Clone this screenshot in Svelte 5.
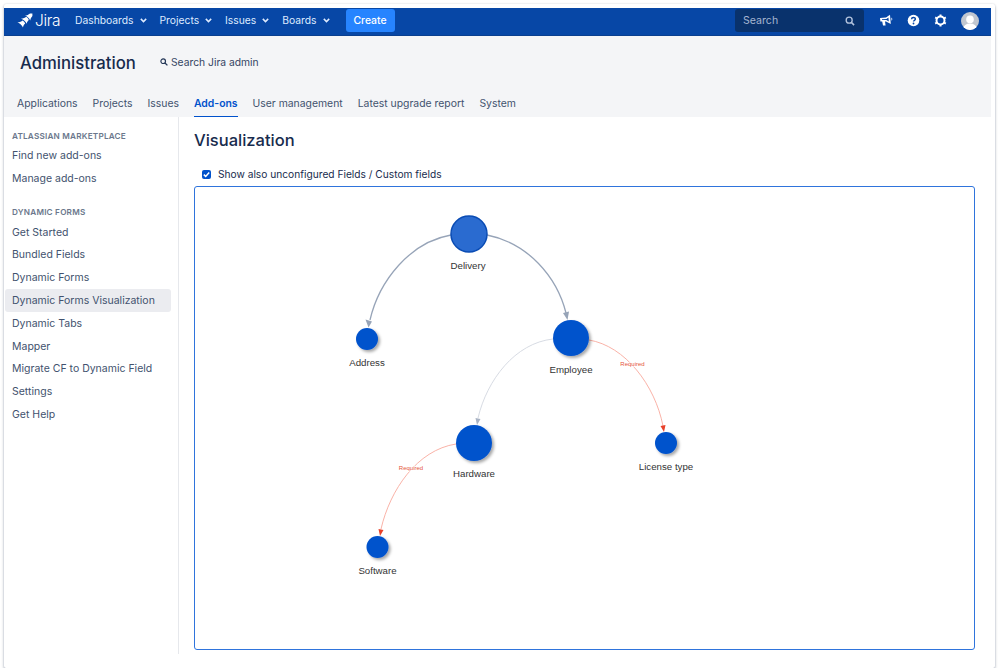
<script lang="ts">
    const navItems = ["Dashboards", "Projects", "Issues", "Boards"];
    const tabs = ["Applications", "Projects", "Issues", "Add-ons", "User management", "Latest upgrade report", "System"];
    const sections = [
        { title: "Atlassian Marketplace", links: ["Find new add-ons", "Manage add-ons"] },
        {
            title: "Dynamic Forms",
            links: ["Get Started", "Bundled Fields", "Dynamic Forms", "Dynamic Forms Visualization", "Dynamic Tabs", "Mapper", "Migrate CF to Dynamic Field", "Settings", "Get Help"],
        },
    ];

    // graph coordinates are page pixels, the svg viewBox maps them into the panel
    const nodes = [
        { label: "Delivery", x: 469, y: 234, r: 18, ly: 268.5, root: true },
        { label: "Address", x: 367, y: 339, r: 11, ly: 365.5 },
        { label: "Employee", x: 571, y: 338, r: 18, ly: 372.5 },
        { label: "Hardware", x: 474, y: 443, r: 18, ly: 476.5 },
        { label: "License type", x: 666, y: 443, r: 11, ly: 469.5 },
        { label: "Software", x: 377.5, y: 547, r: 11, ly: 573.5 },
    ];
    const edges = [
        { d: "M451 235 C410 242 379 281 370 320", kind: "main", head: "365.5,319.5 372,321.5 368.5,327.5" },
        { d: "M487 235 C528 243 557 277 566 313", kind: "main", head: "563,313 569,311.5 567.5,320" },
        { d: "M553 339 C515 343 487 380 478 418", kind: "plain", head: "475.5,418 480.5,419 477,425" },
        { d: "M589 340 C625 346 655 385 663 426", kind: "req", head: "660.5,426 665.5,425 664,432" },
        { d: "M456 444 C417 450 390 490 381 529", kind: "req", head: "378.5,529 383.5,530 380,536" },
    ];
</script>

<div class="window">
    <header class="topbar">
        <div class="logo">
            <svg width="16" height="15" viewBox="0 0 16 15">
                <path d="M8 2.6 C10 2.4 11.5 1.6 13 0.4 L15.4 0.4 L15.4 3 C14 4.5 13.4 6 13.2 7.6 C12.2 5.2 10.4 3.4 8 2.6 Z" fill="#fff" />
                <path d="M4 5.8 C6.4 5.6 8 4.8 9.2 3.8 C10.6 4.6 11.4 5.8 11.8 7 C10.8 7.8 9.8 9.4 9.6 10.8 C8.6 8.4 6.6 6.6 4 5.8 Z" fill="#fff" />
                <path d="M0.4 9.4 C2.8 9.2 4.4 8.4 5.6 7.4 C7 8.2 7.8 9.4 8.2 10.6 C7 11.6 6.2 13 6 14.6 C5 12 3 10.2 0.4 9.4 Z" fill="#fff" />
            </svg>
            <span>Jira</span>
        </div>
        <nav class="nav">
            {#each navItems as item}
                <span class="nav-item">
                    {item}
                    <svg width="7" height="5" viewBox="0 0 7 5"><path d="M0.8 0.9 L3.5 3.6 L6.2 0.9" fill="none" stroke="#deebff" stroke-width="1.5" /></svg>
                </span>
            {/each}
        </nav>
        <button class="create">Create</button>
        <div class="spacer"></div>
        <div class="search">
            <span>Search</span>
            <svg width="10" height="10" viewBox="0 0 11 11"><circle cx="4.6" cy="4.6" r="3.3" fill="none" stroke="#b3c3dd" stroke-width="1.5" /><path d="M7 7 L10 10" stroke="#b3c3dd" stroke-width="1.7" /></svg>
        </div>
        <div class="top-icons">
            <svg width="14" height="13" viewBox="0 0 14 13">
                <path d="M1 4 L7 3.5 L11 0.8 L11.8 10 L7 7.5 L6 7.5 L6.6 11.5 L4 11.5 L3.2 7.6 L1.4 7.5 Z M3 5.3 L3 6 L7.4 6 L9.8 7.4 L9.4 3.4 L7.4 5 Z M12.3 3.6 C13.6 4.4 13.6 6 12.5 6.8 Z" fill="#fff" fill-rule="evenodd" />
            </svg>
            <svg width="13" height="13" viewBox="0 0 13 13">
                <circle cx="6.5" cy="6.5" r="5.8" fill="#fff" />
                <path d="M4.5 5.2 C4.6 3 8.4 3 8.4 5 C8.4 6.4 6.5 6.2 6.5 7.6" fill="none" stroke="#0747a6" stroke-width="1.4" />
                <circle cx="6.5" cy="9.5" r="0.9" fill="#0747a6" />
            </svg>
            <svg width="13" height="13" viewBox="0 0 13 13">
                <circle cx="6.5" cy="6.5" r="4" fill="none" stroke="#fff" stroke-width="2" />
                <g stroke="#fff" stroke-width="2">
                    <path d="M6.5 0.4 V2.5 M6.5 10.5 V12.6 M1.2 3.4 L3 4.5 M10 8.5 L11.8 9.6 M1.2 9.6 L3 8.5 M10 4.5 L11.8 3.4" />
                </g>
            </svg>
            <svg class="avatar" width="18" height="18" viewBox="0 0 18 18">
                <clipPath id="av"><circle cx="9" cy="9" r="9" /></clipPath>
                <g clip-path="url(#av)">
                    <rect width="18" height="18" fill="#c1c7d0" />
                    <circle cx="9" cy="7.4" r="3.8" fill="#fff" />
                    <ellipse cx="9" cy="16.5" rx="6.8" ry="5" fill="#fff" />
                </g>
            </svg>
        </div>
    </header>

    <div class="admin-head">
        <div class="admin-row">
            <h1>Administration</h1>
            <div class="admin-search">
                <svg width="8" height="8" viewBox="0 0 8 8"><circle cx="3.2" cy="3.2" r="2.3" fill="none" stroke="#253858" stroke-width="1.2" /><path d="M5 5 L7.4 7.4" stroke="#253858" stroke-width="1.3" /></svg>
                <span>Search Jira admin</span>
            </div>
        </div>
        <div class="tabs">
            {#each tabs as tab}
                <span class="tab" class:active={tab === "Add-ons"}>{tab}</span>
            {/each}
        </div>
    </div>

    <div class="body">
        <aside class="sidebar">
            {#each sections as section}
                <div class="section">
                    <div class="section-title">{section.title}</div>
                    {#each section.links as link}
                        <div class="side-link" class:current={link === "Dynamic Forms Visualization"}>{link}</div>
                    {/each}
                </div>
            {/each}
        </aside>

        <main class="content">
            <h2>Visualization</h2>
            <label class="check">
                <span class="box">
                    <svg width="9" height="9" viewBox="0 0 9 9"><path d="M1.8 4.6 L3.7 6.4 L7.2 2.6" fill="none" stroke="#fff" stroke-width="1.5" /></svg>
                </span>
                Show also unconfigured Fields / Custom fields
            </label>
            <div class="panel">
                <svg class="graph" viewBox="195 187 779 462" width="779" height="462">
                    <defs>
                        <filter id="shadow" x="-40%" y="-40%" width="190%" height="190%">
                            <feDropShadow dx="2" dy="2" stdDeviation="1.6" flood-color="#000" flood-opacity="0.35" />
                        </filter>
                    </defs>
                    {#each edges as edge}
                        <path class="edge {edge.kind}" d={edge.d} />
                        <polygon class="head {edge.kind}" points={edge.head} />
                    {/each}
                    <text class="req-label" x="632.5" y="366">Required</text>
                    <text class="req-label" x="411" y="470">Required</text>
                    {#each nodes as node}
                        <circle class="node" class:root={node.root} cx={node.x} cy={node.y} r={node.r} filter={node.root ? undefined : "url(#shadow)"} />
                        <text class="node-label" x={node.x - (node.root ? 1 : 0)} y={node.ly}>{node.label}</text>
                    {/each}
                </svg>
            </div>
        </main>
    </div>
</div>

<style>
    :global(body) {
        margin: 0;
        background: #fff;
        font-family: Inter, "Liberation Sans", sans-serif;
    }

    .window {
        box-sizing: border-box;
        width: 991px;
        height: 664px;
        margin: 4px 0 0 4px;
        padding: 4px 4px 0 0;
        background: #fff;
        border-radius: 2px;
        box-shadow: 0 2px 3px rgba(9, 30, 66, 0.3), 0 0 2px rgba(9, 30, 66, 0.18);
        overflow: hidden;
    }

    .topbar {
        display: flex;
        align-items: center;
        height: 28px;
        padding: 0 12px 2px 13px;
        background: #0747a6;
        border-bottom: 1px solid #0a3f8f;
        box-sizing: border-box;
        color: #deebff;
    }

    .logo {
        display: flex;
        align-items: center;
        gap: 2px;
        width: 58px;
        color: #fff;
        font-size: 15.5px;
        font-weight: 300;
        letter-spacing: -0.3px;
    }

    .nav {
        display: flex;
        gap: 13px;
        margin-bottom: 1px;
        font-size: 10.3px;
    }

    .nav-item {
        display: flex;
        align-items: center;
        gap: 6px;
    }

    .create {
        width: 49px;
        height: 23px;
        margin-left: 16px;
        padding: 0;
        border: 0;
        border-radius: 3px;
        background: #2684ff;
        color: #fff;
        font: 500 10.4px Inter, sans-serif;
    }

    .spacer {
        flex: 1;
    }

    .search {
        display: flex;
        align-items: center;
        justify-content: space-between;
        box-sizing: border-box;
        width: 129px;
        height: 23px;
        padding: 0 9px 0 8px;
        border-radius: 3px;
        background: #09326c;
        color: #a5b5d0;
        font-size: 10.6px;
    }

    .top-icons {
        display: flex;
        align-items: center;
        gap: 14px;
        margin-left: 15px;
    }

    .avatar {
        margin-left: 0;
    }

    .admin-head {
        height: 81px;
        background: #f4f5f7;
        display: flex;
        flex-direction: column;
        justify-content: space-between;
    }

    .admin-row {
        display: flex;
        align-items: center;
        padding: 15px 0 0 16px;
    }

    h1 {
        margin: 0;
        width: 140px;
        color: #172b4d;
        font-size: 16.7px;
        font-weight: 500;
        line-height: 24px;
    }

    .admin-search {
        display: flex;
        align-items: center;
        gap: 3px;
        margin-bottom: 2px;
        color: #344563;
        font-size: 10.3px;
    }

    .tabs {
        display: flex;
        gap: 15px;
        padding-left: 13px;
        color: #42526e;
        font-size: 10.4px;
    }

    .tab {
        padding: 0 0 5px;
        line-height: 14px;
        border-bottom: 1px solid transparent;
    }

    .tab.active {
        color: #0052cc;
        font-weight: 600;
        border-bottom-color: #0052cc;
    }

    .body {
        display: flex;
        height: 537px;
    }

    .sidebar {
        box-sizing: border-box;
        width: 175px;
        padding: 13px 7px 0 1px;
        border-right: 1px solid #e6e8ec;
    }

    .section {
        margin-bottom: 16px;
    }

    .section-title {
        padding-left: 7px;
        color: #6b778c;
        font-size: 8.2px;
        font-weight: 600;
        line-height: 12px;
        letter-spacing: 0.2px;
        text-transform: uppercase;
    }

    .side-link {
        display: flex;
        align-items: center;
        height: 22.8px;
        padding-left: 7px;
        color: #42526e;
        font-size: 10.5px;
        border-radius: 3px;
    }

    .section-title + .side-link {
        margin-top: 2.6px;
    }

    .side-link.current {
        background: #ebecf0;
    }

    .content {
        flex: 1;
        padding: 0 16px 0 15px;
        min-width: 0;
    }

    h2 {
        margin: 11px 0 0;
        color: #172b4d;
        font-size: 16.5px;
        font-weight: 500;
        line-height: 24px;
    }

    .check {
        display: flex;
        align-items: center;
        gap: 7px;
        height: 16px;
        margin-top: 14px;
        padding-left: 8px;
        color: #172b4d;
        font-size: 10.2px;
    }

    .box {
        display: flex;
        align-items: center;
        justify-content: center;
        width: 9px;
        height: 9px;
        border-radius: 2px;
        background: #0052cc;
    }

    .panel {
        box-sizing: border-box;
        width: 781px;
        height: 464px;
        margin-top: 4px;
        border: 1px solid #2f74dc;
        border-radius: 3px;
    }

    .graph {
        display: block;
    }

    .edge {
        fill: none;
    }

    .edge.main {
        stroke: #97a4b8;
        stroke-width: 1.3;
    }

    .edge.plain {
        stroke: #d3d7e0;
        stroke-width: 0.9;
    }

    .edge.req {
        stroke: #f8a99d;
        stroke-width: 0.9;
    }

    .head.main {
        fill: #97a4b8;
    }

    .head.plain {
        fill: #a9b3c4;
    }

    .head.req {
        fill: #e8412a;
    }

    .node {
        fill: #0052cc;
    }

    .node.root {
        fill: #2a6bd0;
        stroke: #0a4cb4;
        stroke-width: 1.5;
    }

    .node-label {
        fill: #333;
        font-family: "Liberation Sans", Arial, sans-serif;
        font-size: 9.7px;
        text-anchor: middle;
    }

    .req-label {
        fill: #e5553b;
        font-family: "Liberation Sans", Arial, sans-serif;
        font-size: 6px;
        text-anchor: middle;
        paint-order: stroke;
        stroke: #fff;
        stroke-width: 1px;
    }
</style>
